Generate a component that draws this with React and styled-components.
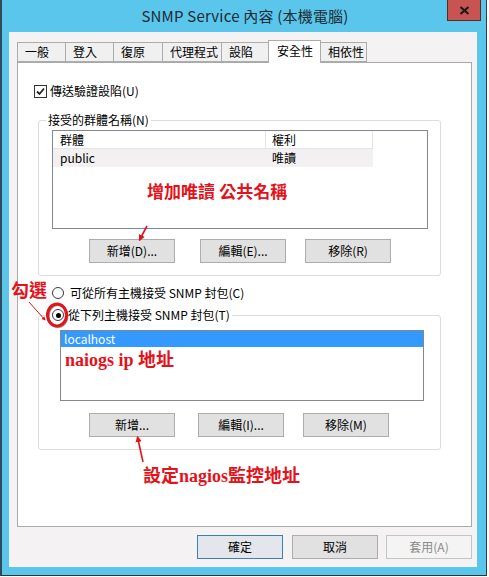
import React from "react";
import styled, { createGlobalStyle } from "styled-components";

const UI = `"Noto Sans CJK TC", "Noto Sans", "Liberation Sans", sans-serif`;
const ANN = `"Liberation Serif", "Noto Sans CJK TC", serif`;

const Global = createGlobalStyle`
  html, body { margin: 0; padding: 0; background: #ffffff; overflow: hidden; }
  body { font-family: ${UI}; font-size: 12px; color: #000; }
`;

const Window = styled.div`
  position: relative;
  box-sizing: content-box;
  width: 484px;
  height: 575px;
  background: #5bc6ec;
  border-left: 2px solid #2f4b5a;
  border-right: 1px solid #3a3a3a;
  border-bottom: 1px solid #333;
  display: flex;
  flex-direction: column;
`;

const TitleBar = styled.div`
  height: 32px;
  display: grid;
  grid-template-columns: 1fr auto 1fr;
  align-items: start;
`;

const Title = styled.div`
  grid-column: 2;
  font: 15px/32px ${UI};
  color: #1d2a33;
  letter-spacing: 0.2px;
  margin-left: 2px;
`;

const Close = styled.div`
  grid-column: 3;
  justify-self: end;
  margin-right: 5px;
  width: 34px;
  height: 21px;
  box-sizing: border-box;
  background: #c75450;
  border: 1px solid #5a2a28;
  border-top: none;
  display: flex;
  align-items: center;
  justify-content: center;
`;

const Client = styled.div`
  margin-left: 7px;
  width: 468px;
  height: 535px;
  box-sizing: border-box;
  background: #f4f2f2;
  padding: 8px 0 0 8px;
  display: flex;
  flex-direction: column;
`;

const TabStrip = styled.div`
  display: flex;
  align-items: flex-end;
  height: 22px;
`;

const Tab = styled.div`
  box-sizing: border-box;
  width: ${(p) => p.$w}px;
  height: ${(p) => (p.$active ? 23 : 20)}px;
  margin-right: -1px;
  margin-bottom: ${(p) => (p.$active ? -1 : 0)}px;
  border: 1px solid #acacac;
  border-bottom: ${(p) => (p.$active ? "none" : "1px solid #acacac")};
  background: ${(p) => (p.$active ? "#ffffff" : "#f0f0f0")};
  position: relative;
  z-index: ${(p) => (p.$active ? 2 : 1)};
  padding-left: ${(p) => (p.$active ? 8 : 7)}px;
  font: 12px/${(p) => (p.$active ? 19 : 18)}px ${UI};
  white-space: nowrap;
`;

const Panel = styled.div`
  position: relative;
  z-index: 1;
  box-sizing: border-box;
  width: 455px;
  height: 465px;
  background: #ffffff;
  border: 1px solid #a9a9a9;
  display: flex;
  flex-direction: column;
  align-items: flex-start;
`;

const CheckRow = styled.label`
  margin: 20px 0 0 16px;
  display: flex;
  align-items: center;
  gap: 3px;
  font: 12px/16px ${UI};
`;

const CheckBox = styled.span`
  box-sizing: border-box;
  width: 13px;
  height: 13px;
  border: 1px solid #333;
  background: #fff;
  display: inline-flex;
  align-items: center;
  justify-content: center;
`;

const Group = styled.fieldset`
  box-sizing: border-box;
  width: 403px;
  min-width: 0;
  margin: ${(p) => p.$mt}px 0 0 20px;
  padding: 0 ${(p) => p.$pl}px 12px ${(p) => p.$pl}px;
  border: 1px solid #dcdcdc;
  border-radius: 3px;
  display: flex;
  flex-direction: column;
  align-items: flex-start;
`;

const Legend = styled.legend`
  margin-left: ${(p) => p.$ml}px;
  padding: 0 2px;
  font: 12px/16px ${UI};
  display: flex;
  align-items: center;
  gap: 4px;
`;

const List = styled.div`
  box-sizing: border-box;
  width: ${(p) => p.$w}px;
  height: ${(p) => p.$h}px;
  margin-top: ${(p) => p.$mt}px;
  border: 1px solid #828790;
  background: #fff;
  display: flex;
  flex-direction: column;
`;

const Row = styled.div`
  display: flex;
  width: 320px;
  height: 18px;
  background: ${(p) => (p.$head ? "#ffffff" : "#f2f0f0")};
  border-bottom: ${(p) => (p.$head ? "1px solid #e5e5e5" : "none")};
  box-sizing: border-box;
`;

const Cell = styled.div`
  box-sizing: border-box;
  width: ${(p) => p.$w}px;
  padding-left: ${(p) => p.$pl}px;
  font: 12px/17px ${UI};
  border-right: ${(p) => (p.$head ? "1px solid #e5e5e5" : "none")};
`;

const SelRow = styled.div`
  height: 16px;
  background: #3399ff;
  color: #fff;
  padding-left: 3px;
  font: 12px/16px ${UI};
`;

const BtnRow = styled.div`
  display: flex;
  margin-top: ${(p) => p.$mt}px;
  padding-left: ${(p) => p.$pl || 0}px;
`;

const Btn = styled.button`
  box-sizing: border-box;
  width: 86px;
  height: 24px;
  margin-left: ${(p) => p.$ml || 0}px;
  padding: 0;
  font: 12px/1 ${UI};
  color: ${(p) => (p.$kind === "disabled" ? "#8a8a8a" : "#000")};
  background: ${(p) =>
    p.$kind === "disabled" ? "#f4f4f4" : p.$kind === "default" ? "#e3e7ec" : "#e1e1e1"};
  border: 1px solid
    ${(p) =>
      p.$kind === "disabled" ? "#c4c4c4" : p.$kind === "default" ? "#3c7fb1" : "#adadad"};
`;

const RadioRow = styled.label`
  margin: 9px 0 0 34px;
  display: flex;
  align-items: center;
  gap: 6px;
  font: 12px/16px ${UI};
`;

const Radio = styled.span`
  box-sizing: border-box;
  width: 12px;
  height: 12px;
  border-radius: 50%;
  border: 1px solid #3a3a3a;
  background: #fff;
  display: inline-flex;
  align-items: center;
  justify-content: center;
  &::after {
    content: "";
    width: ${(p) => (p.$on ? 5 : 0)}px;
    height: ${(p) => (p.$on ? 5 : 0)}px;
    border-radius: 50%;
    background: #000;
  }
`;

const ButtonBar = styled.div`
  display: flex;
  justify-content: flex-end;
  width: 455px;
  margin-top: 8px;
  gap: 9px;
`;

/* Annotation layer: red notes drawn over the screenshot */
const Notes = styled.div`
  position: absolute;
  left: -2px;
  top: 0;
  width: 489px;
  height: 577px;
  pointer-events: none;
  z-index: 5;
`;

const Note = styled.div`
  position: absolute;
  left: ${(p) => p.$x}px;
  top: ${(p) => p.$y}px;
  font: 700 ${(p) => p.$s}px/1 ${ANN};
  color: #e3131b;
  white-space: nowrap;
  letter-spacing: ${(p) => p.$ls || 0}px;
`;

const NoteSvg = styled.svg`
  position: absolute;
  left: 0;
  top: 0;
`;

export default function App() {
  const tabs = [
    ["一般", 49],
    ["登入", 49],
    ["復原", 50],
    ["代理程式", 60],
    ["設陷", 48],
    ["安全性", 53, true],
    ["相依性", 47],
  ];
  return (
    <>
      <Global />
      <Window>
        <TitleBar>
          <Title>SNMP Service 內容 (本機電腦)</Title>
          <Close>
            <svg width="11" height="9" viewBox="0 0 11 9">
              <path d="M1.5 1 L9.5 8 M9.5 1 L1.5 8" stroke="#1a1a1a" strokeWidth="2.2" />
            </svg>
          </Close>
        </TitleBar>
        <Client>
          <TabStrip>
            {tabs.map(([t, w, a]) => (
              <Tab key={t} $w={w} $active={a}>
                {t}
              </Tab>
            ))}
          </TabStrip>
          <Panel>
            <CheckRow>
              <CheckBox>
                <svg width="9" height="9" viewBox="0 0 9 9">
                  <path d="M1 4.5 L3.5 7 L8 1.5" fill="none" stroke="#222" strokeWidth="1.8" />
                </svg>
              </CheckBox>
              傳送驗證設陷(U)
            </CheckRow>

            <Group $mt={13} $pl={13}>
              <Legend $ml={-6}>接受的群體名稱(N)</Legend>
              <List $w={376} $h={99} $mt={2}>
                <Row $head>
                  <Cell $head $w={213} $pl={7}>群體</Cell>
                  <Cell $head $w={107} $pl={6}>權利</Cell>
                </Row>
                <Row>
                  <Cell $w={213} $pl={7}>public</Cell>
                  <Cell $w={107} $pl={6}>唯讀</Cell>
                </Row>
              </List>
              <BtnRow $mt={10} $pl={37}>
                <Btn>新增(D)...</Btn>
                <Btn $ml={25}>編輯(E)...</Btn>
                <Btn $ml={19}>移除(R)</Btn>
              </BtnRow>
            </Group>

            <RadioRow>
              <Radio />
              可從所有主機接受 SNMP 封包(C)
            </RadioRow>

            <Group $mt={6} $pl={21}>
              <Legend $ml={-10}>
                <Radio $on />
                從下列主機接受 SNMP 封包(T)
              </Legend>
              <List $w={364} $h={71} $mt={7}>
                <SelRow>localhost</SelRow>
              </List>
              <BtnRow $mt={12} $pl={29}>
                <Btn>新增...</Btn>
                <Btn $ml={23}>編輯(I)...</Btn>
                <Btn $ml={19}>移除(M)</Btn>
              </BtnRow>
            </Group>
          </Panel>
          <ButtonBar>
            <Btn $kind="default">確定</Btn>
            <Btn>取消</Btn>
            <Btn $kind="disabled" style={{ marginLeft: -1 }}>套用(A)</Btn>
          </ButtonBar>
        </Client>

        <Notes>
          <NoteSvg width="489" height="577" viewBox="0 0 489 577">
            <defs>
              <marker id="head" viewBox="0 0 10 10" refX="8" refY="5" markerWidth="4" markerHeight="5" orient="auto">
                <path d="M0 0 L10 5 L0 10 z" fill="#e3131b" />
              </marker>
            </defs>
            <line x1="147" y1="226" x2="139.5" y2="240" stroke="#e3131b" strokeWidth="1.6" markerEnd="url(#head)" />
            <line x1="143" y1="462" x2="137.5" y2="437" stroke="#e3131b" strokeWidth="1.6" markerEnd="url(#head)" />
            <line x1="29" y1="302" x2="45" y2="320" stroke="#e3131b" strokeWidth="1" markerEnd="url(#head)" />
            <ellipse cx="58" cy="316" rx="9.5" ry="11" fill="none" stroke="#555" strokeWidth="2" opacity="0.6" />
            <ellipse cx="57" cy="315" rx="9.5" ry="11" fill="none" stroke="#e3131b" strokeWidth="3" />
          </NoteSvg>
          <Note $x={147} $y={184} $s={17}>增加唯讀 公共名稱</Note>
          <Note $x={11} $y={282} $s={18}>勾選</Note>
          <Note $x={65} $y={351} $s={18}>naiogs ip 地址</Note>
          <Note $x={143} $y={467} $s={18}>設定nagios監控地址</Note>
        </Notes>
      </Window>
    </>
  );
}
